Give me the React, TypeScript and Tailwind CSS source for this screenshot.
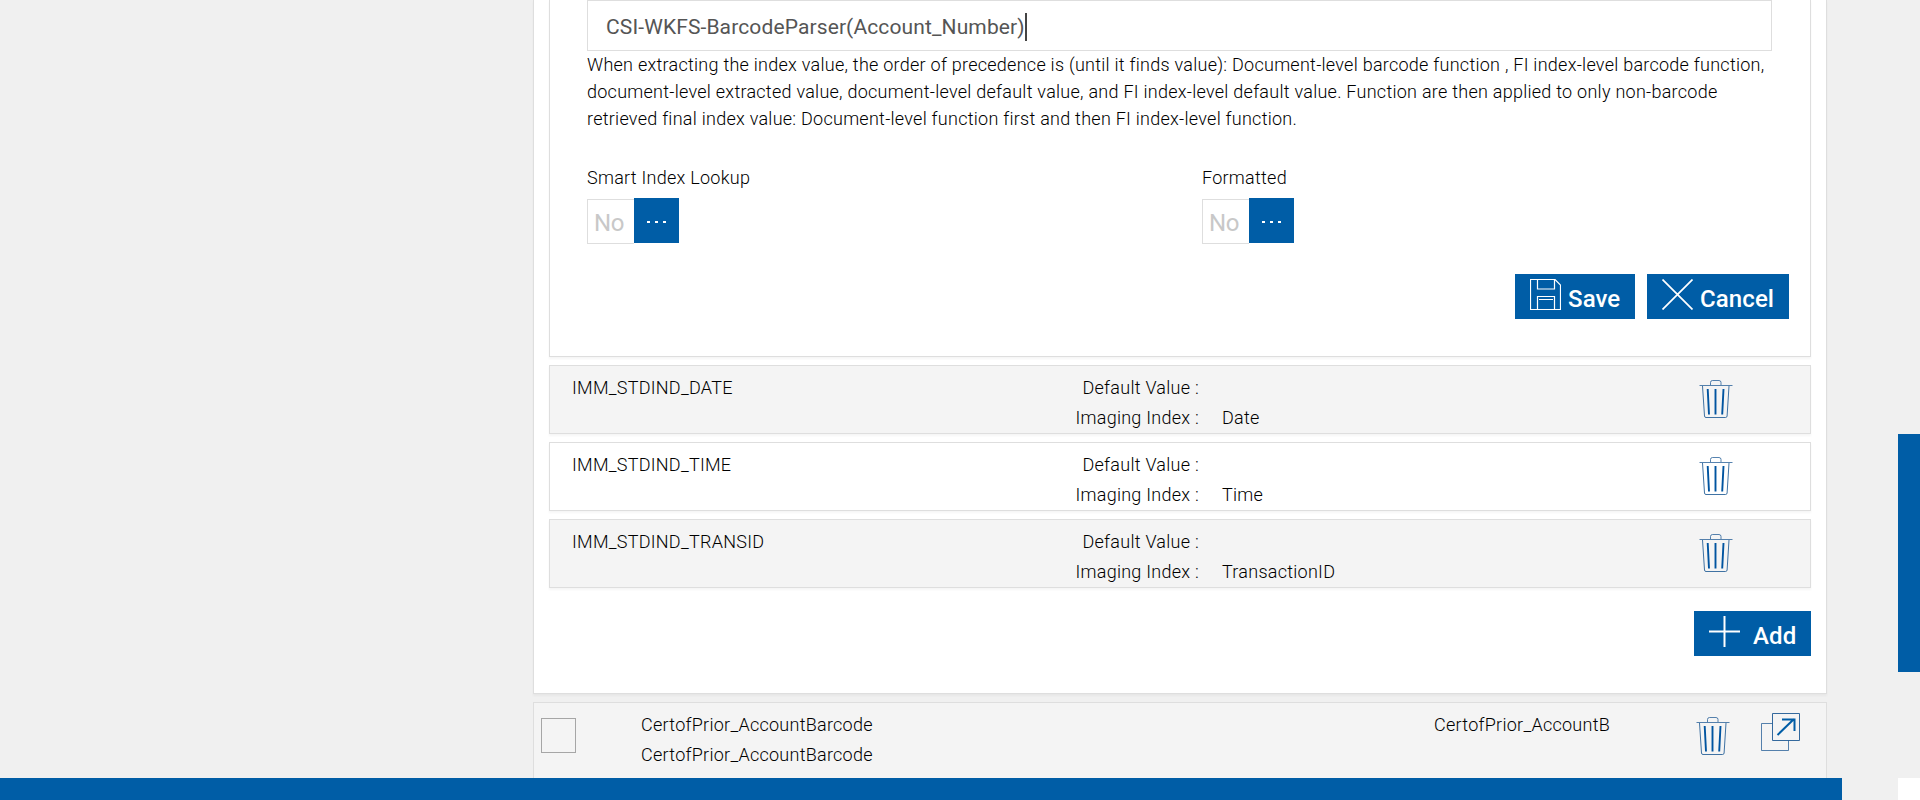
const rows = [
  { name: 'IMM_STDIND_DATE', index: 'Date', shaded: true },
  { name: 'IMM_STDIND_TIME', index: 'Time', shaded: false },
  { name: 'IMM_STDIND_TRANSID', index: 'TransactionID', shaded: true },
];

function TrashIcon() {
  return (
    <svg width="34" height="40" viewBox="0 0 34 40" fill="none" stroke="#1f5a94">
      <path d="M0.5 6.5H33.5" strokeOpacity="0.75" />
      <path d="M11.5 6V3.5Q11.5 1.5 13.5 1.5H20Q22 1.5 22 3.5V6" strokeOpacity="0.75" />
      <path d="M3.5 7L5.5 37Q5.6 38.5 7 38.5H26.5Q28 38.5 28.1 37L30 7" strokeOpacity="0.85" />
      <path d="M8.7 10L10 35.5M16.5 10V35.5M24.5 10L23.2 35.5" stroke="#0054a0" strokeWidth="1.9" />
    </svg>
  );
}

function OpenIcon() {
  return (
    <svg width="40" height="40" viewBox="0 0 40 40" fill="none" stroke="#1f5a94">
      <path d="M11.5 11.5H0.5V38.5H27.5V28.5" strokeOpacity="0.75" />
      <path d="M11.5 1.5H38.5V28.5H11.5Z" strokeOpacity="0.9" />
      <path d="M16.5 23L33 7M21 7.5H33.5V19" stroke="#005da6" strokeWidth="2" />
    </svg>
  );
}

function SaveIcon() {
  return (
    <svg width="31" height="31" viewBox="0 0 31 31" fill="none" stroke="#fff" strokeWidth="1.2">
      <path d="M0.5 0.5H25L30.5 6V30.5H0.5Z" />
      <path d="M7.5 0.5V10H24.5V0.5" />
      <path d="M7.5 30.5V17.5H24.5V30.5M9 20.5H23" />
    </svg>
  );
}

function CancelIcon() {
  return (
    <svg width="31" height="31" viewBox="0 0 31 31" fill="none" stroke="#fff" strokeWidth="1.7">
      <path d="M0.5 0.5L30.5 30.5M30.5 0.5L0.5 30.5" />
    </svg>
  );
}

function AddIcon() {
  return (
    <svg width="31" height="31" viewBox="0 0 31 31" fill="none" stroke="#fff" strokeWidth="2">
      <path d="M15.5 0V31M0 15.5H31" />
    </svg>
  );
}

function Toggle({ label }: { label: string }) {
  return (
    <div className="w-[615px] shrink-0">
      <div className="h-[27px]">{label}</div>
      <div className="mt-[7px] flex">
        <div className="mt-px h-[45px] w-[47px] border border-r-0 border-[#dedede] pl-[6px] text-2xl leading-[46px] font-normal tracking-[-0.4px] text-[#c8c8c8]">
          No
        </div>
        <button className="flex h-[45px] w-[45px] items-center justify-center gap-[5px] bg-[#005da6] pt-[2px]">
          <span className="h-[2px] w-[3px] bg-white" />
          <span className="h-[2px] w-[3px] bg-white" />
          <span className="h-[2px] w-[3px] bg-white" />
        </button>
      </div>
    </div>
  );
}

export default function App() {
  return (
    <div className="flex h-[800px] w-[1920px] overflow-hidden bg-[#f0f0f0] font-[Roboto,sans-serif] text-lg leading-[27px] font-light tracking-[0.26px] text-black">
      <div className="flex w-[1842px] flex-col">
        <main className="flex h-[778px] flex-col gap-2 overflow-hidden pl-[533px]">
          {/* document type panel */}
          <section className="h-[694px] w-[1294px] shrink-0 border border-t-0 border-[#dedede] bg-white px-[15px] shadow-[0_2px_2px_rgba(0,0,0,0.04)]">
            <div className="flex flex-col gap-2">
              <div className="h-[357px] border border-t-0 border-[#dedede] shadow-[0_2px_2px_rgba(0,0,0,0.04)]">
                <div className="pl-[37px]">
                  <div className="flex h-[51px] w-[1185px] items-center border border-[#dedede] pt-[3px] pl-[18px] text-[21px] font-normal tracking-[0.12px] text-[#555]">
                    <span>CSI-WKFS-BarcodeParser(Account_Number)</span>
                    <span className="h-7 w-[2px] bg-[#444]" />
                  </div>
                  <p className="w-[1190px] whitespace-nowrap">
                    When extracting the index value, the order of precedence is (until it finds value): Document-level barcode function , FI index-level barcode function,
                    <br />
                    document-level extracted value, document-level default value, and FI index-level default value. Function are then applied to only non-barcode
                    <br />
                    retrieved final index value: Document-level function first and then FI index-level function.
                  </p>
                  <div className="mt-8 flex">
                    <Toggle label="Smart Index Lookup" />
                    <Toggle label="Formatted" />
                  </div>
                </div>
                <div className="mt-[30px] flex justify-end gap-3 pr-[21px] text-2xl font-medium tracking-[0.1px] text-white">
                  <button className="flex h-[45px] w-[120px] bg-[#005da6] pt-[5px] pl-[15px]">
                    <SaveIcon />
                    <span className="pt-1 pl-[7px]">Save</span>
                  </button>
                  <button className="flex h-[45px] w-[142px] bg-[#005da6] pt-[5px] pl-[15px]">
                    <CancelIcon />
                    <span className="pt-1 pl-[7px]">Cancel</span>
                  </button>
                </div>
              </div>
              {rows.map((row) => (
                <div
                  key={row.name}
                  className={`flex h-[69px] border border-[#dedede] pl-[22px] leading-[30px] shadow-[0_2px_2px_rgba(0,0,0,0.04)] ${row.shaded ? 'bg-[#f4f4f4]' : 'bg-white'}`}
                >
                  <div className="w-[400px] pt-[7px]">{row.name}</div>
                  <div className="w-[228px] pt-[7px] pr-px text-right">
                    <div>Default Value :</div>
                    <div>Imaging Index :</div>
                  </div>
                  <div className="w-[499px] pt-[37px] pl-[22px]">{row.index}</div>
                  <div className="pt-[13px]">
                    <TrashIcon />
                  </div>
                </div>
              ))}
            </div>
            <div className="mt-[23px] flex justify-end text-2xl font-medium tracking-[0.1px] text-white">
              <button className="flex h-[45px] w-[117px] bg-[#005da6] pt-[5px] pl-[15px]">
                <AddIcon />
                <span className="pt-1 pl-[13px]">Add</span>
              </button>
            </div>
          </section>
          {/* next document type */}
          <section className="flex h-[120px] w-[1294px] shrink-0 border border-[#dedede] bg-[#f4f4f4] leading-[30px]">
            <div className="mt-[15px] ml-[7px] h-[35px] w-[35px] border border-[#a6a6a6]" />
            <div className="w-[793px] pt-[7px] pl-[65px]">
              <div>CertofPrior_AccountBarcode</div>
              <div>CertofPrior_AccountBarcode</div>
            </div>
            <div className="w-[327px] pt-[7px] pl-[65px]">CertofPrior_AccountB</div>
            <div className="pt-[13px]">
              <TrashIcon />
            </div>
            <div className="pt-[9px] pl-[31px]">
              <OpenIcon />
            </div>
          </section>
        </main>
        <footer className="h-[22px] bg-[#005da6]" />
      </div>
      <aside className="ml-auto flex w-[22px] flex-col justify-between pt-[434px]">
        <div className="h-[238px] bg-[#005da6]" />
        <div className="h-[22px] bg-white" />
      </aside>
    </div>
  );
}
